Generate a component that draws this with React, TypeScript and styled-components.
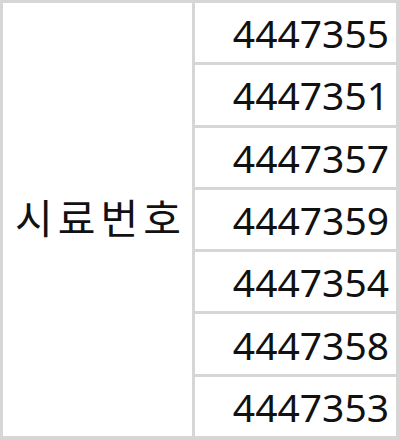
import styled, { createGlobalStyle } from "styled-components";

const GlobalStyle = createGlobalStyle`
  html, body {
    margin: 0;
    padding: 0;
    background: #ffffff;
  }
`;

const Sheet = styled.div`
  box-sizing: border-box;
  width: 400px;
  height: 440px;
  display: grid;
  grid-template-columns: 189px 1fr;
  grid-template-rows: repeat(7, 1fr);
  gap: 3px;
  padding: 3px 4px 4px 3px;
  background: #d6d6d6;
  font-family: "Noto Sans", "Noto Sans CJK KR", sans-serif;
  color: #111;
`;

const LabelCell = styled.div`
  grid-row: 1 / span 7;
  background: #fff;
  display: flex;
  align-items: center;
  justify-content: center;
  font-family: "Noto Sans CJK KR", sans-serif;
  font-size: 41px;
  letter-spacing: 5px;
  padding: 0 0 6px 6px;
`;

const ValueCell = styled.div`
  background: #fff;
  display: flex;
  align-items: center;
  justify-content: flex-end;
  padding-right: 7px;
  font-size: 39px;
  line-height: 1;
`;

const samples = [
  "4447355",
  "4447351",
  "4447357",
  "4447359",
  "4447354",
  "4447358",
  "4447353",
];

export default function App() {
  return (
    <>
      <GlobalStyle />
      <Sheet>
        <LabelCell>시료번호</LabelCell>
        {samples.map((s) => (
          <ValueCell key={s}>{s}</ValueCell>
        ))}
      </Sheet>
    </>
  );
}
